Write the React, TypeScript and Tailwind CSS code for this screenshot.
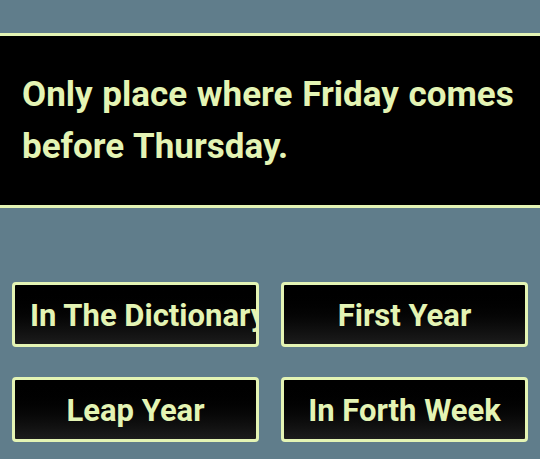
import React from 'react';

const answers = ['In The Dictionary', 'First Year', 'Leap Year', 'In Forth Week'];

export default function App(): JSX.Element {
  return (
    <div
      className="w-[540px] h-[459px] bg-[#607d8b] pt-[33px] overflow-hidden"
      style={{ fontFamily: 'Roboto, "Liberation Sans", sans-serif' }}
    >
      <header className="bg-black border-y-[3px] border-[#e4f4b4] h-[175px] px-[22px] flex items-center">
        <h1 className="text-[35px] leading-[52px] font-bold text-[#e4f4b4] [word-spacing:1px]">
          Only place where Friday comes before Thursday.
        </h1>
      </header>

      <main className="grid grid-cols-2 gap-x-[22px] gap-y-[30px] px-[12px] mt-[74px]">
        {answers.map((a) => (
          <button
            key={a}
            className="h-[65px] rounded-[4px] border-[3px] border-[#e4f4b4] bg-gradient-to-b from-black to-[#1c1c1c] px-[15px] pt-[3px] overflow-hidden whitespace-nowrap text-center text-[31px] font-bold text-[#e4f4b4]"
          >
            {a}
          </button>
        ))}
      </main>
    </div>
  );
}
